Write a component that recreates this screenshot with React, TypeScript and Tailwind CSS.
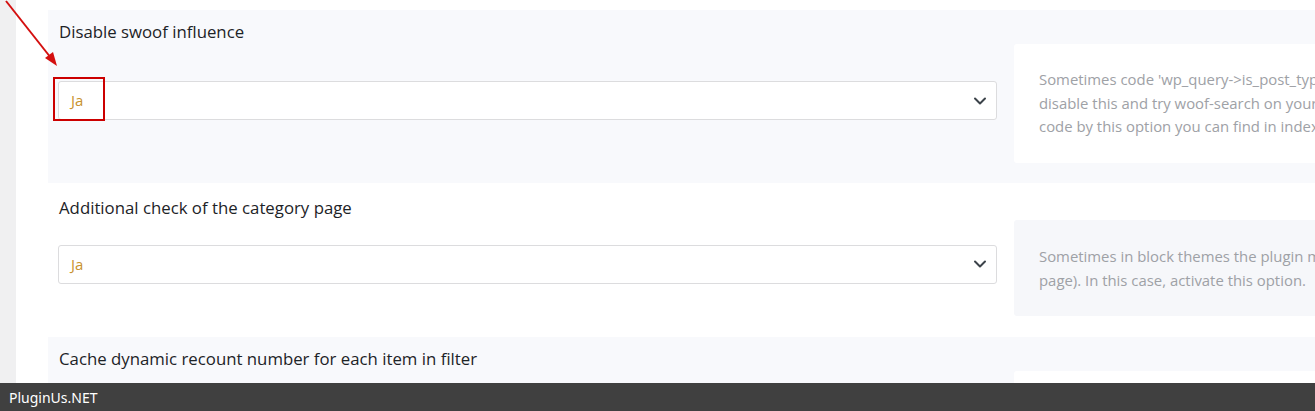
import React from 'react';

interface OptionRow {
  title: string;
  value?: string;
  lines: string[];
  tone: 'light' | 'white';
}

const rows: OptionRow[] = [
  {
    title: 'Disable swoof influence',
    value: 'Ja',
    lines: [
      "Sometimes code 'wp_query->is_post_type_archive()' could be a reason of conflict, so",
      'disable this and try woof-search on your site, or contact the theme developer. Look this',
      'code by this option you can find in index.php of the plugin.',
    ],
    tone: 'light',
  },
  {
    title: 'Additional check of the category page',
    value: 'Ja',
    lines: [
      'Sometimes in block themes the plugin may not define the type of page (category',
      'page). In this case, activate this option.',
    ],
    tone: 'white',
  },
];

const Chevron = () => (
  <svg width="14" height="14" viewBox="0 0 14 14" fill="none">
    <path d="M2 4.5 L7 9.5 L12 4.5" stroke="#3c434a" strokeWidth="2" strokeLinecap="round" strokeLinejoin="round" />
  </svg>
);

const SelectBox = ({ value }: { value: string }) => (
  <div className="flex h-[39px] w-[939px] shrink-0 items-center justify-between rounded-[3px] border border-[#dcdcde] bg-white pl-[12px] pr-[9px]">
    <span className="text-[15px] text-[#c8922e]">{value}</span>
    <Chevron />
  </div>
);

export default function App() {
  return (
    <div className="relative flex h-[411px] w-full overflow-hidden bg-white font-['Open_Sans','Noto_Sans',sans-serif]">
      <div className="w-[16px] shrink-0 bg-[#f0f0f1]" />
      <div className="min-w-0 flex-1 pl-[32px] pt-[10px]">
        {/* row 1 */}
        <section className="bg-[#f8f9fc] pb-[20px] pl-[10px] pt-[10px]">
          <h3 className="pl-[1px] text-[16.8px] leading-[24px] text-[#1d2327]">{rows[0].title}</h3>
          <div className="flex items-start gap-[17px]">
            <div className="mt-[37px]">
              <SelectBox value={rows[0].value!} />
            </div>
            <div className="w-[700px] shrink-0 rounded-[3px] bg-white py-[24px] pl-[25px] text-[14.9px] leading-[23.5px] text-[#9ea1a6]">
              {rows[0].lines.map((l, i) => (
                <p key={i} className="whitespace-nowrap">{l}</p>
              ))}
            </div>
          </div>
        </section>

        {/* row 2 */}
        <section className="bg-white pb-[21px] pl-[10px] pt-[13px]">
          <h3 className="pl-[1px] text-[16.8px] leading-[24px] text-[#1d2327]">{rows[1].title}</h3>
          <div className="flex items-start gap-[17px]">
            <div className="mt-[25px]">
              <SelectBox value={rows[1].value!} />
            </div>
            <div className="w-[700px] shrink-0 rounded-[3px] bg-[#f6f7fa] py-[24px] pl-[25px] text-[14.9px] leading-[24px] text-[#9ea1a6]">
              {rows[1].lines.map((l, i) => (
                <p key={i} className="whitespace-nowrap">{l}</p>
              ))}
            </div>
          </div>
        </section>

        {/* row 3 */}
        <section className="bg-[#f8f9fc] pl-[10px] pt-[10px]">
          <h3 className="pl-[1px] text-[16.8px] leading-[24px] text-[#1d2327]">
            Cache dynamic recount number for each item in filter
          </h3>
          <div className="flex items-start gap-[17px]">
            <div className="w-[939px] shrink-0" />
            <div className="h-[80px] w-[700px] shrink-0 rounded-[3px] bg-white" />
          </div>
        </section>
      </div>

      {/* annotation overlay */}
      <svg className="pointer-events-none absolute left-0 top-0" width="70" height="75" viewBox="0 0 70 75">
        <line x1="6" y1="1" x2="51" y2="58" stroke="#d40f0f" strokeWidth="2" />
        <polygon points="57,66 45,58 53,52" fill="#d40f0f" />
      </svg>
      <div className="pointer-events-none absolute left-[53px] top-[77px] h-[44px] w-[52px] border-2 border-[#cc0000]" />

      {/* footer bar */}
      <div className="absolute bottom-0 left-0 flex h-[28px] w-full items-center bg-[#404040] pl-[9px] font-['Noto_Sans',sans-serif] text-[14px] text-white">
        PluginUs.NET
      </div>
    </div>
  );
}
